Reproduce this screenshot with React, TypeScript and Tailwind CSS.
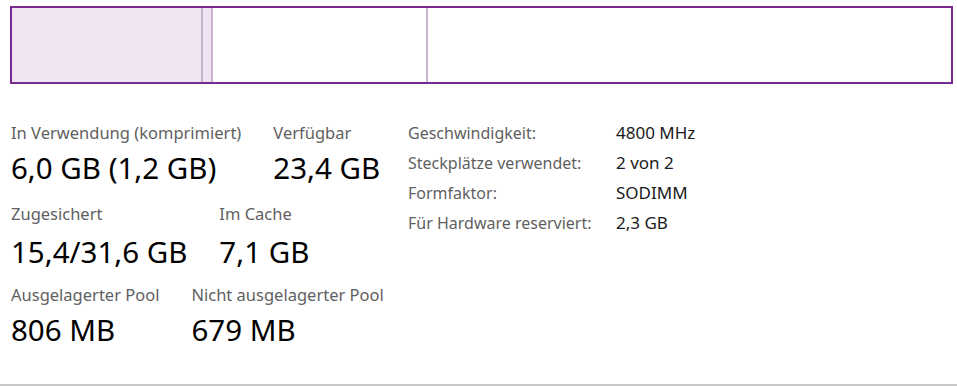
import React from "react"

const font = { fontFamily: '"Noto Sans", "Open Sans", sans-serif' }

const stats = [
  [
    { label: "In Verwendung (komprimiert)", value: "6,0 GB (1,2 GB)" },
    { label: "Verfügbar", value: "23,4 GB" },
  ],
  [
    { label: "Zugesichert", value: "15,4/31,6 GB" },
    { label: "Im Cache", value: "7,1 GB" },
  ],
  [
    { label: "Ausgelagerter Pool", value: "806 MB" },
    { label: "Nicht ausgelagerter Pool", value: "679 MB" },
  ],
]

const details = [
  ["Geschwindigkeit:", "4800 MHz"],
  ["Steckplätze verwendet:", "2 von 2"],
  ["Formfaktor:", "SODIMM"],
  ["Für Hardware reserviert:", "2,3 GB"],
]

export default function App() {
  return (
    <div className="w-[957px] h-[386px] bg-white flex flex-col overflow-hidden" style={font}>
      {/* Memory composition */}
      <div className="pt-[6px] pl-[10px] pr-[4px]">
        <div className="h-[78px] border-2 border-[#7a2a8e] flex">
          <div className="w-[191px] bg-[#efe4f2] border-r-2 border-[#c8b4cc]" />
          <div className="w-[10px] bg-[#efe4f2] border-r-2 border-[#c8b4cc]" />
          <div className="w-[215px] border-r-2 border-[#c8b4cc]" />
          <div className="flex-1" />
        </div>
      </div>

      <div className="flex-1 flex pl-[11px] pt-[37px]">
        <div className="w-[397px] flex flex-col gap-[11px]">
          {stats.map((row, i) => (
            <div key={i} className="flex gap-8">
              {row.map((s) => (
                <div key={s.label} className="flex flex-col">
                  <span className="text-[16.5px] leading-[24px] text-[#5f5f5f]">{s.label}</span>
                  <span
                    className={`text-[29.5px] leading-[46px] text-black ${i === 1 ? "mt-[3px] -mb-[3px]" : ""}`}
                  >
                    {s.value}
                  </span>
                </div>
              ))}
            </div>
          ))}
        </div>

        <div className="grid grid-cols-[208px_auto] auto-rows-[30px] content-start">
          {details.map(([k, v]) => (
            <React.Fragment key={k}>
              <span className="text-[16px] leading-[24px] text-[#5f5f5f]">{k}</span>
              <span className="text-[17px] leading-[24px] text-[#1a1a1a]">{v}</span>
            </React.Fragment>
          ))}
        </div>
      </div>

      <div className="h-[2px] bg-[#c8c8c8]" />
    </div>
  )
}
